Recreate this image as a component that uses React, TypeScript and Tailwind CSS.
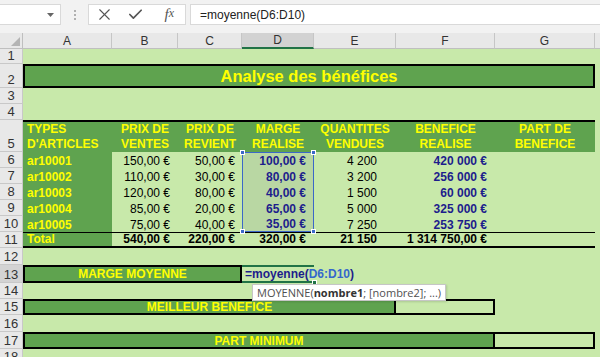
import type { ReactNode } from "react";
import { Check, X } from "lucide-react";

const grid = "grid grid-cols-[23px_89px_66px_64px_72px_82px_99px_100px_1fr]";
const light = "bg-[#c8e9aa]";
const dark = "bg-[#5fa34f]";
const tint = "bg-[#b9d7a3]";

function cx(...c: (string | false | undefined)[]) {
	return c.filter(Boolean).join(" ");
}

const heads = [
	["TYPES", "D'ARTICLES"],
	["PRIX DE", "VENTES"],
	["PRIX DE", "REVIENT"],
	["MARGE", "REALISE"],
	["QUANTITES", "VENDUES"],
	["BENEFICE", "REALISE"],
	["PART DE", "BENEFICE"],
];

const rows = [
	["ar10001", "150,00 €", "50,00 €", "100,00 €", "4 200", "420 000 €"],
	["ar10002", "110,00 €", "30,00 €", "80,00 €", "3 200", "256 000 €"],
	["ar10003", "120,00 €", "80,00 €", "40,00 €", "1 500", "60 000 €"],
	["ar10004", "85,00 €", "20,00 €", "65,00 €", "5 000", "325 000 €"],
	["ar10005", "75,00 €", "40,00 €", "35,00 €", "7 250", "253 750 €"],
];

function Row({ n, h, active, children }: { n: number; h: string; active?: boolean; children?: ReactNode }) {
	return (
		<div className={cx(grid, h, "overflow-visible")}>
			<div
				className={cx(
					"flex min-h-0 items-end justify-center overflow-hidden border-r border-b border-[#c8c8c8] text-[13px] leading-[14px] text-[#333]",
					active ? "bg-[#d3d3d3]" : "bg-[#e8e8e8]",
				)}
			>
				{n}
			</div>
			{children}
		</div>
	);
}

function C({ className, children }: { className?: string; children?: ReactNode }) {
	return <div className={cx("flex min-h-0 items-end whitespace-nowrap text-[12px] leading-[14px]", className)}>{children}</div>;
}

function Handle({ className }: { className: string }) {
	return <span className={cx("absolute z-10 size-[5px] border border-white bg-[#3b68c8]", className)} />;
}

export default function App() {
	return (
		<div className="h-[357px] w-[600px] overflow-hidden bg-[#f2f2f2] font-['Liberation_Sans',Arial,sans-serif]">
			{/* formula bar */}
			<div className="flex h-[33px] pt-[4px]">
				<div className="flex h-[21px] w-[61px] items-center justify-end border border-l-0 border-[#d9d9d9] bg-white pr-[6px]">
					<svg width="7" height="4" viewBox="0 0 7 4">
						<polygon points="0,0 7,0 3.5,4" fill="#666" />
					</svg>
				</div>
				<div className="flex h-[21px] w-[27px] flex-col items-center justify-center gap-[2px]">
					<span className="size-[2px] rounded-full bg-[#9a9a9a]" />
					<span className="size-[2px] rounded-full bg-[#9a9a9a]" />
					<span className="size-[2px] rounded-full bg-[#9a9a9a]" />
				</div>
				<div className="flex h-[21px] w-[98px] items-center border border-[#d9d9d9] bg-white">
					<div className="flex w-[32px] justify-center">
						<X size={19} strokeWidth={1.4} color="#555" />
					</div>
					<div className="flex w-[32px] justify-center">
						<Check size={17} strokeWidth={2.4} color="#555" />
					</div>
					<div className="flex w-[34px] justify-center pl-[2px] font-['Liberation_Serif',serif] text-[15px] leading-none text-[#555] italic">
						f<span className="text-[12px]">x</span>
					</div>
				</div>
				<div className="ml-[4px] flex h-[21px] flex-1 items-center border border-r-0 border-[#d9d9d9] bg-white pl-[9px] text-[12px] leading-none text-[#222]">
					=moyenne(D6:D10)
				</div>
			</div>

			{/* column headers */}
			<div className={cx(grid, "h-[16px]")}>
				<div className="relative border-r border-b border-[#bfbfbf] bg-[#e8e8e8]">
					<svg className="absolute right-[2px] bottom-[2px]" width="9" height="9" viewBox="0 0 9 9">
						<polygon points="9,0 9,9 0,9" fill="#b4b4b4" />
					</svg>
				</div>
				{["A", "B", "C", "D", "E", "F", "G"].map((l) => (
					<div
						key={l}
						className={cx(
							"flex items-center justify-center border-r border-[#c6c6c6] text-[12px] leading-none text-[#333]",
							l === "D" ? "border-b-2 border-b-[#217346] bg-[#d2d2d2] text-[#1f5f3a]" : "border-b border-b-[#bfbfbf] bg-[#e8e8e8]",
						)}
					>
						{l}
					</div>
				))}
				<div className="border-b border-[#bfbfbf] bg-[#e8e8e8]" />
			</div>

			<Row n={1} h="h-[15px]">
				<div className={cx("col-span-8", light)} />
			</Row>

			<Row n={2} h="h-[24px]">
				<div className={cx("col-span-7 flex items-center justify-center border-2 border-black pt-[1px] text-[16.5px] leading-none font-bold text-[#ffff00]", dark)}>
					Analyse des bénéfices
				</div>
				<div className={light} />
			</Row>

			<Row n={3} h="h-[16px]">
				<div className={cx("col-span-8", light)} />
			</Row>
			<Row n={4} h="h-[16px]">
				<div className={cx("col-span-8", light)} />
			</Row>

			<Row n={5} h="h-[32px]">
				{heads.map(([a, b], i) => (
					<div
						key={i}
						className={cx(
							"flex flex-col justify-end border-t-2 border-black text-[12px] leading-[15px] font-bold whitespace-nowrap text-[#ffff00]",
							dark,
							i === 0 ? "items-start pl-[4px]" : "items-center",
						)}
					>
						<span>{a}</span>
						<span>{b}</span>
					</div>
				))}
				<div className={light} />
			</Row>

			{rows.map((r, i) => (
				<Row key={r[0]} n={6 + i} h="h-[16px]">
					<C className={cx(dark, "pl-[4px] font-bold text-[#ffff00]")}>{r[0]}</C>
					<C className={cx(light, "justify-end pr-[8px] text-black")}>{r[1]}</C>
					<C className={cx(light, "justify-end pr-[7px] text-black")}>{r[2]}</C>
					<C
						className={cx(
							tint,
							"relative justify-end border-x border-[#3b68c8] pr-[7px] font-bold text-[#1d1d8c]",
							i === 0 && "border-t",
							i === 4 && "border-b",
						)}
					>
						{r[3]}
						{i === 0 && (
							<>
								<Handle className="-top-[3px] -left-[3px]" />
								<Handle className="-top-[3px] -right-[3px]" />
							</>
						)}
						{i === 4 && (
							<>
								<Handle className="-bottom-[3px] -left-[3px]" />
								<Handle className="-right-[3px] -bottom-[3px]" />
							</>
						)}
					</C>
					<C className={cx(light, "justify-end pr-[19px] text-black")}>{r[4]}</C>
					<C className={cx(light, "justify-end pr-[8px] font-bold text-[#1d1d8c]")}>{r[5]}</C>
					<C className={light} />
					<C className={light} />
				</Row>
			))}

			<Row n={11} h="h-[16px]">
				<C className={cx(dark, "border-t border-b-2 border-black pl-[4px] font-bold text-[#ffff00]")}>Total</C>
				<C className={cx(light, "justify-end border-t border-b-2 border-black pr-[8px] font-bold text-black")}>540,00 €</C>
				<C className={cx(light, "justify-end border-t border-b-2 border-black pr-[7px] font-bold text-black")}>220,00 €</C>
				<C className={cx(light, "justify-end border-t border-b-2 border-black pr-[8px] font-bold text-black")}>320,00 €</C>
				<C className={cx(light, "justify-end border-t border-b-2 border-black pr-[19px] font-bold text-black")}>21 150</C>
				<C className={cx(light, "justify-end border-t border-b-2 border-black pr-[8px] font-bold text-black")}>1 314 750,00 €</C>
				<C className={cx(light, "border-t border-b-2 border-black")} />
				<C className={light} />
			</Row>

			<Row n={12} h="h-[17px]">
				<div className={cx("col-span-8", light)} />
			</Row>

			<Row n={13} h="h-[18px]" active>
				<div className={cx("col-span-3 flex items-center justify-center border-2 border-black text-[12px] leading-none font-bold text-[#ffff00]", dark)}>
					MARGE MOYENNE
				</div>
				<div className={cx("relative flex min-h-0 items-center border-y-2 border-[#217346] pl-[3px]", light)}>
					<span className="relative z-10 text-[12px] leading-none font-bold whitespace-nowrap text-[#1d1d8c]">
						=moyenne(<span className="text-[#3567cc]">D6:D10</span>)
					</span>
					<span className="absolute -right-[3px] -bottom-[4px] z-10 size-[5px] border border-white bg-[#217346]" />
					<div className="absolute top-[calc(100%+3px)] left-[10px] z-20 flex h-[17px] items-center border border-[#c6c6c6] bg-white px-[4px] font-['Open_Sans',sans-serif] text-[11px] leading-none whitespace-nowrap text-[#505050] shadow-[1px_1px_2px_rgba(0,0,0,0.15)]">
						MOYENNE(<b className="text-[#333]">nombre1</b>; [nombre2]; ...)
					</div>
				</div>
				<div className={cx("col-span-4", light)} />
			</Row>

			<Row n={14} h="h-[16px]">
				<div className={cx("col-span-8", light)} />
			</Row>

			<Row n={15} h="h-[16px]">
				<div className={cx("col-span-5 flex items-center justify-center border-2 border-black text-[12px] leading-none font-bold text-[#ffff00]", dark)}>
					MEILLEUR BENEFICE
				</div>
				<div className={cx("border-y-2 border-r-2 border-black", light)} />
				<div className={cx("col-span-2", light)} />
			</Row>

			<Row n={16} h="h-[17px]">
				<div className={cx("col-span-8", light)} />
			</Row>

			<Row n={17} h="h-[17px]">
				<div className={cx("col-span-6 flex items-center justify-center border-2 border-black text-[12px] leading-none font-bold text-[#ffff00]", dark)}>
					PART MINIMUM
				</div>
				<div className={cx("border-y-2 border-r-2 border-black", light)} />
				<div className={light} />
			</Row>

			<Row n={18} h="h-[16px]">
				<div className={cx("col-span-8", light)} />
			</Row>
		</div>
	);
}
